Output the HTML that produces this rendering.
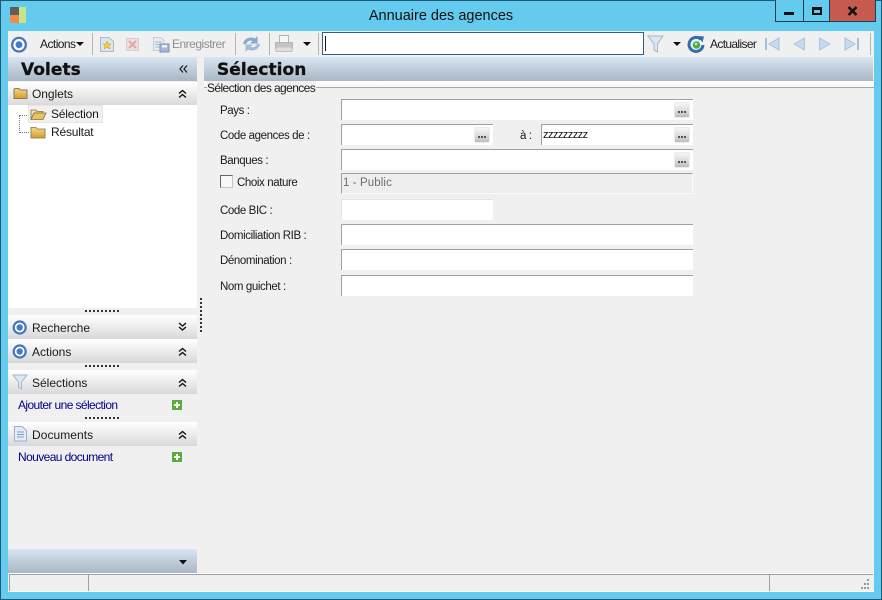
<!DOCTYPE html>
<html><head><meta charset="utf-8"><title>Annuaire des agences</title>
<style>
html,body{margin:0;padding:0}
body{width:882px;height:600px;overflow:hidden;background:#64cbee;font:12px "Liberation Sans",sans-serif;color:#1a1a1a;position:relative}
.a,.t,.f,.b,.h,.d,svg{position:absolute}
.t{white-space:nowrap;line-height:14px}
.l{font-size:11.5px;letter-spacing:-.4px;margin-top:1px}
.f{background:#fff;border-top:1px solid #a0a0a0;border-left:1px solid #a0a0a0;box-sizing:border-box}
.b{width:16px;height:16px;background:linear-gradient(#f6f6f6,#dedede 50%,#bdbdbd);border:1px solid #ececec;box-sizing:border-box;border-radius:2px}
.b:after{content:"";position:absolute;left:3px;top:8px;width:2px;height:2px;background:#555;box-shadow:3px 0 #555,6px 0 #555}
.h{left:8px;width:189px;height:24px;background:linear-gradient(#fff,#f2f2f2 35%,#d8d8d8)}
.d{left:85px;width:36px;height:2px;background:repeating-linear-gradient(90deg,#333 0 2px,transparent 2px 4px)}
.g{background:linear-gradient(#d8e5f2,#a9b6c3)}
.sep{position:absolute;top:33px;width:1px;height:22px;background:#b4b4b4}
.n{font-size:12px;color:#00008b;letter-spacing:-.6px}
.hd{font:bold 17px/20px "DejaVu Sans",sans-serif;color:#111;letter-spacing:.05px;-webkit-text-stroke:.3px #111}
</style></head><body>
<div class="a" style="left:0;top:0;width:882px;height:1px;background:#1d5a75"></div>
<div class="a" style="left:0;top:0;width:1px;height:600px;background:#1d5a75"></div>
<div class="a" style="left:881px;top:0;width:1px;height:600px;background:#1d5a75"></div>
<div class="a" style="left:0;top:599px;width:882px;height:1px;background:#1d5a75"></div>
<div class="a" style="left:10px;top:7px;width:9px;height:8px;background:#5e5e5e"></div>
<div class="a" style="left:10px;top:15px;width:9px;height:8px;background:#f08a4b"></div>
<div class="a" style="left:19px;top:7px;width:7px;height:16px;background:#c5e58b"></div>
<div class="t" style="left:0;width:882px;text-align:center;top:7px;font-size:14.5px;line-height:18px;color:#111">Annuaire des agences</div>

<div class="a" style="left:775px;top:0;width:101px;height:22px;border:1px solid #1b3f55;border-top:0;box-sizing:border-box;background:#64cbee"></div>
<div class="a" style="left:803px;top:0;width:1px;height:22px;background:#1b3f55"></div>
<div class="a" style="left:829px;top:0;width:1px;height:22px;background:#1b3f55"></div>
<div class="a" style="left:830px;top:0;width:45px;height:21px;background:#c75a4e"></div>
<div class="a" style="left:784px;top:12px;width:10px;height:3px;background:#111"></div>
<div class="a" style="left:812px;top:7px;width:10px;height:8px;border:2px solid #111;border-top-width:3px;box-sizing:border-box"></div>
<svg style="left:847px;top:6px" width="11" height="10"><path d="M1.500 1L9.500 9M9.500 1L1.500 9" stroke="#111" stroke-width="2.600"/></svg>

<div class="a" style="left:8px;top:31px;width:866px;height:561px;background:#f0f0f0"></div>

<svg style="left:10px;top:36px" width="18" height="18"><circle cx="9" cy="8.700" r="6.800" fill="#fff" stroke="#4a75bd" stroke-width="2.300"/><circle cx="9" cy="8.700" r="3.400" fill="#3f7ccc"/></svg>
<div class="t" style="left:40px;top:37px;letter-spacing:-.55px">Actions</div>
<svg style="left:76px;top:42px" width="9" height="5"><path d="M0 0H8L4 4Z" fill="#111"/></svg>
<div class="sep" style="left:92px"></div>
<svg style="left:99px;top:36px" width="16" height="17"><path d="M1.500 1.500H10L14.500 5.500V15.500H1.500Z" fill="#dbe5f2" stroke="#aeb9c8"/><path d="M8 5L9.300 8H12L10 10L11 13L8 11.200L5 13L6 10L4 8H6.700Z" fill="#f2cf3c" stroke="#c99b25" stroke-width=".5"/></svg>
<svg style="left:125px;top:37px" width="15" height="15"><rect x="1.500" y="1.500" width="12" height="12" fill="#ecdfe3" stroke="#d5cdd2"/><path d="M4 4L11 11M11 4L4 11" stroke="#e2a6aa" stroke-width="2.200"/></svg>
<svg style="left:152px;top:36px" width="18" height="17"><path d="M1.500 1.500H9L12 4.500V14.500H1.500Z" fill="#e6edf5" stroke="#c2ccd8"/><path d="M3 6H10M3 8.500H10M3 11H8" stroke="#aab8c8"/><rect x="8" y="8" width="9" height="8" fill="#a9b6d6" stroke="#8290b5"/><rect x="10" y="9" width="5" height="2.500" fill="#eef2f8"/></svg>
<div class="t" style="left:172px;top:37px;color:#8f8f8f;letter-spacing:-.5px">Enregistrer</div>
<div class="sep" style="left:235px"></div>
<svg style="left:242px;top:35px" width="19" height="18"><path d="M1 9C2 3.500 8 1 13 3.500L15.500 1V8.500H8L10.500 6C8 5 5 6 4 9.500Z" fill="#88a9cf"/><path d="M18 9C17 14.500 11 17 6 14.500L3.500 17V9.500H11L8.500 12C11 13 14 12 15 8.500Z" fill="#a2bcd9"/></svg>
<div class="sep" style="left:269px"></div>
<svg style="left:275px;top:34px" width="18" height="19"><rect x="4.500" y="1.500" width="9" height="8" fill="#f6f6f6" stroke="#b4b4b4"/><path d="M.5 8.500H17.500V14.500H.5Z" fill="#c4c4c4" stroke="#b4b4b4"/><rect x="1" y="13" width="16" height="4.500" fill="#dedede" stroke="#c0c0c0"/></svg>
<svg style="left:303px;top:42px" width="9" height="5"><path d="M0 0H8L4 4Z" fill="#111"/></svg>
<div class="sep" style="left:318px"></div>
<div class="a" style="left:322px;top:32px;width:322px;height:23px;background:#fff;border:1px solid #2f5f8a;box-sizing:border-box"></div>
<div class="a" style="left:325px;top:36px;width:1px;height:15px;background:#111"></div>
<svg style="left:647px;top:35px" width="18" height="18"><path d="M1 1H16L10.500 9V17L7 15V9Z" fill="#dbe7f2" stroke="#a3b6c8"/></svg>
<svg style="left:673px;top:42px" width="9" height="5"><path d="M0 0H8L4 4Z" fill="#111"/></svg>
<svg style="left:687px;top:35px" width="19" height="18"><path d="M14 4.500A7 7 0 1 0 16 10" fill="none" stroke="#2f6cb4" stroke-width="3"/><path d="M11 1L17 1.500L15.500 7.500Z" fill="#2f6cb4"/><circle cx="9.500" cy="10" r="3.800" fill="#55ae45"/><circle cx="9" cy="9" r="1.200" fill="#c8eec0"/></svg>
<div class="t" style="left:710px;top:37px;letter-spacing:-.65px">Actualiser</div>
<svg style="left:765px;top:36px" width="16" height="16"><path d="M1 2V14" stroke="#a3c0e2" stroke-width="2"/><path d="M14 2V14L4 8Z" fill="#c8daef" stroke="#a3c0e2"/></svg>
<svg style="left:792px;top:36px" width="14" height="16"><path d="M12.500 2V14L2 8Z" fill="#c8daef" stroke="#a9c4e4"/></svg>
<svg style="left:818px;top:36px" width="14" height="16"><path d="M1.500 2V14L12 8Z" fill="#c8daef" stroke="#a9c4e4"/></svg>
<svg style="left:843px;top:36px" width="16" height="16"><path d="M15 2V14" stroke="#a3c0e2" stroke-width="2"/><path d="M2 2V14L12 8Z" fill="#c8daef" stroke="#a3c0e2"/></svg>
<div class="sep" style="left:870px"></div>

<div class="a g" style="left:8px;top:57px;width:189px;height:24px"></div>
<div class="t hd" style="left:21px;top:60px;line-height:20px">Volets</div>
<svg style="left:179px;top:65px" width="10" height="9"><path d="M4 .5L1 4L4 7.500M8 .5L5 4L8 7.500" fill="none" stroke="#222" stroke-width="1.300"/></svg>
<div class="a g" style="left:204px;top:57px;width:669px;height:24px"></div>
<div class="t hd" style="left:217px;top:60px;line-height:20px">Sélection</div>
<div class="a" style="left:204px;top:81px;width:670px;height:6px;background:linear-gradient(#fff,#f4f4f4)"></div>
<div class="a" style="left:204px;top:87px;width:670px;height:1px;background:#a8a8a8"></div>

<div class="h" style="top:82px"></div>
<svg style="left:13px;top:86px" width="15" height="14"><defs><linearGradient id="fg" x1="0" y1="0" x2="0" y2="1"><stop offset="0" stop-color="#f3d98c"/><stop offset="1" stop-color="#d49c2c"/></linearGradient></defs><path d="M1 3V12.500H14V4H7L6 2.500H2Z" fill="url(#fg)" stroke="#8a7a50"/></svg>
<div class="t" style="left:32px;top:87px;letter-spacing:-.05px">Onglets</div>
<svg style="left:178px;top:89px" width="10" height="10"><path d="M1 4.500L4.500 1.500L8 4.500M1 8.500L4.500 5.500L8 8.500" fill="none" stroke="#111" stroke-width="1.400"/></svg>

<div class="a" style="left:8px;top:105px;width:189px;height:203px;background:#fff"></div>
<div class="a" style="left:19px;top:115px;width:10px;height:18px;border-left:1px dotted #777;border-top:1px dotted #777;border-bottom:1px dotted #777;box-sizing:border-box"></div>
<div class="a" style="left:28px;top:105px;width:75px;height:18px;background:#f1f1f1;border:1px solid #e6e6e6;box-sizing:border-box"></div>
<svg style="left:30px;top:107px" width="17" height="14"><path d="M1 3H6L7 4.500H13V6H4L1 12.500Z" fill="#f2e0a8" stroke="#7c6f4c" stroke-width=".8"/><path d="M4 6H16L13 12.500H1Z" fill="#eec25a" stroke="#7c6f4c" stroke-width=".8"/></svg>
<div class="t" style="left:51px;top:107px;letter-spacing:-.2px">Sélection</div>
<svg style="left:30px;top:125px" width="16" height="14"><path d="M1 2.500H6L7 4H15V13H1Z" fill="url(#fg)" stroke="#7c6f4c" stroke-width=".8"/></svg>
<div class="t" style="left:51px;top:125px;letter-spacing:-.2px">Résultat</div>

<div class="d" style="top:310px"></div>
<div class="a" style="left:200px;top:298px;width:2px;height:36px;background:repeating-linear-gradient(#333 0 2px,transparent 2px 4px)"></div>

<div class="h" style="top:315px"></div>
<svg style="left:12px;top:318px" width="18" height="19"><circle cx="7.700" cy="9.500" r="6" fill="#fff" stroke="#4a75bd" stroke-width="2.200"/><circle cx="7.700" cy="9.500" r="3.200" fill="#3f7ccc"/></svg>
<div class="t" style="left:32px;top:321px">Recherche</div>
<svg style="left:178px;top:322px" width="10" height="10"><path d="M1 1L4.500 4L8 1M1 5L4.500 8L8 5" fill="none" stroke="#111" stroke-width="1.400"/></svg>

<div class="h" style="top:339px"></div>
<svg style="left:12px;top:342px" width="18" height="19"><circle cx="7.700" cy="9.500" r="6" fill="#fff" stroke="#4a75bd" stroke-width="2.200"/><circle cx="7.700" cy="9.500" r="3.200" fill="#3f7ccc"/></svg>
<div class="t" style="left:32px;top:345px">Actions</div>
<svg style="left:178px;top:347px" width="10" height="10"><path d="M1 4.500L4.500 1.500L8 4.500M1 8.500L4.500 5.500L8 8.500" fill="none" stroke="#111" stroke-width="1.400"/></svg>
<div class="d" style="top:365px"></div>

<div class="h" style="top:370px"></div>
<svg style="left:12px;top:374px" width="16" height="16"><path d="M1 1H15L9.500 8V15L6.500 13V8Z" fill="#dbe7f2" stroke="#a3b6c8"/></svg>
<div class="t" style="left:32px;top:376px">Sélections</div>
<svg style="left:178px;top:378px" width="10" height="10"><path d="M1 4.500L4.500 1.500L8 4.500M1 8.500L4.500 5.500L8 8.500" fill="none" stroke="#111" stroke-width="1.400"/></svg>
<div class="t n" style="left:18px;top:398px">Ajouter une sélection</div>
<svg style="left:172px;top:400px" width="11" height="11"><rect width="10" height="10" fill="#5dab3f"/><path d="M5 2V8M2 5H8" stroke="#fff" stroke-width="2"/></svg>
<div class="d" style="top:417px"></div>

<div class="h" style="top:422px"></div>
<svg style="left:13px;top:426px" width="15" height="16"><path d="M1.500 .5H9L13.500 4.500V15H1.500Z" fill="#e4ecf8" stroke="#9db0d0"/><path d="M4 6H11M4 8.500H11M4 11H11" stroke="#7f9cc6"/></svg>
<div class="t" style="left:32px;top:428px;letter-spacing:.05px">Documents</div>
<svg style="left:178px;top:430px" width="10" height="10"><path d="M1 4.500L4.500 1.500L8 4.500M1 8.500L4.500 5.500L8 8.500" fill="none" stroke="#111" stroke-width="1.400"/></svg>
<div class="t n" style="left:18px;top:450px">Nouveau document</div>
<svg style="left:172px;top:452px" width="11" height="11"><rect width="10" height="10" fill="#5dab3f"/><path d="M5 2V8M2 5H8" stroke="#fff" stroke-width="2"/></svg>

<div class="a g" style="left:8px;top:549px;width:189px;height:24px"></div>
<svg style="left:179px;top:560px" width="9" height="6"><path d="M0 0H8L4 4.500Z" fill="#111"/></svg>

<div class="t" style="left:207px;top:81px;background:#f0f0f0;padding-right:1px;letter-spacing:-.6px">Sélection des agences</div>

<div class="t l" style="left:220px;top:103px">Pays :</div>
<div class="f" style="left:341px;top:99px;width:352px;height:21px"></div><div class="b" style="left:674px;top:102px"></div>
<div class="t l" style="left:220px;top:128px">Code agences de :</div>
<div class="f" style="left:341px;top:124px;width:152px;height:21px"></div><div class="b" style="left:474px;top:127px"></div>
<div class="t l" style="left:520px;top:128px">à :</div>
<div class="f" style="left:541px;top:124px;width:152px;height:21px"></div><div class="b" style="left:674px;top:127px"></div>
<div class="t" style="left:543px;top:128px;font-size:11px;letter-spacing:-.55px;color:#111">zzzzzzzzz</div>
<div class="t l" style="left:220px;top:153px">Banques :</div>
<div class="f" style="left:341px;top:149px;width:352px;height:21px"></div><div class="b" style="left:674px;top:152px"></div>

<div class="a" style="left:220px;top:175px;width:13px;height:13px;background:#f8f8f8;border:1px solid #c4c4c4;border-top-color:#666;border-left-color:#666;box-sizing:border-box"></div>
<div class="t l" style="left:237px;top:175px">Choix nature</div>
<div class="f" style="left:341px;top:173px;width:352px;height:21px;background:#eee;border-right:1px solid #fafafa;border-bottom:1px solid #fafafa"></div>
<div class="t" style="left:343px;top:176px;color:#6d6d6d;letter-spacing:.1px;font-size:11.500px">1 - Public</div>

<div class="t l" style="left:220px;top:203px">Code BIC :</div>
<div class="f" style="left:341px;top:199px;width:152px;height:21px;border-color:#e4e4e4"></div>
<div class="t l" style="left:220px;top:228px">Domiciliation RIB :</div>
<div class="f" style="left:341px;top:224px;width:352px;height:21px"></div>
<div class="t l" style="left:220px;top:253px">Dénomination :</div>
<div class="f" style="left:341px;top:249px;width:352px;height:21px"></div>
<div class="t l" style="left:220px;top:279px">Nom guichet :</div>
<div class="f" style="left:341px;top:275px;width:352px;height:21px"></div>

<div class="a" style="left:8px;top:573px;width:866px;height:1px;background:#fff"></div>
<div class="a" style="left:9px;top:574px;width:864px;height:1px;background:#a0a0a0"></div>
<div class="a" style="left:9px;top:574px;width:1px;height:17px;background:#a0a0a0"></div>
<div class="a" style="left:88px;top:574px;width:1px;height:17px;background:#a0a0a0"></div>
<div class="a" style="left:769px;top:574px;width:1px;height:17px;background:#a0a0a0"></div>
<div class="a" style="left:8px;top:591px;width:866px;height:1px;background:#fff"></div>
<svg style="left:858px;top:578px" width="14" height="13"><path d="M9 1h2v2H9zM6 5h2v2H6zM9 5h2v2H9zM3 9h2v2H3zM6 9h2v2H6zM9 9h2v2H9z" fill="#999"/></svg>
</body></html>
